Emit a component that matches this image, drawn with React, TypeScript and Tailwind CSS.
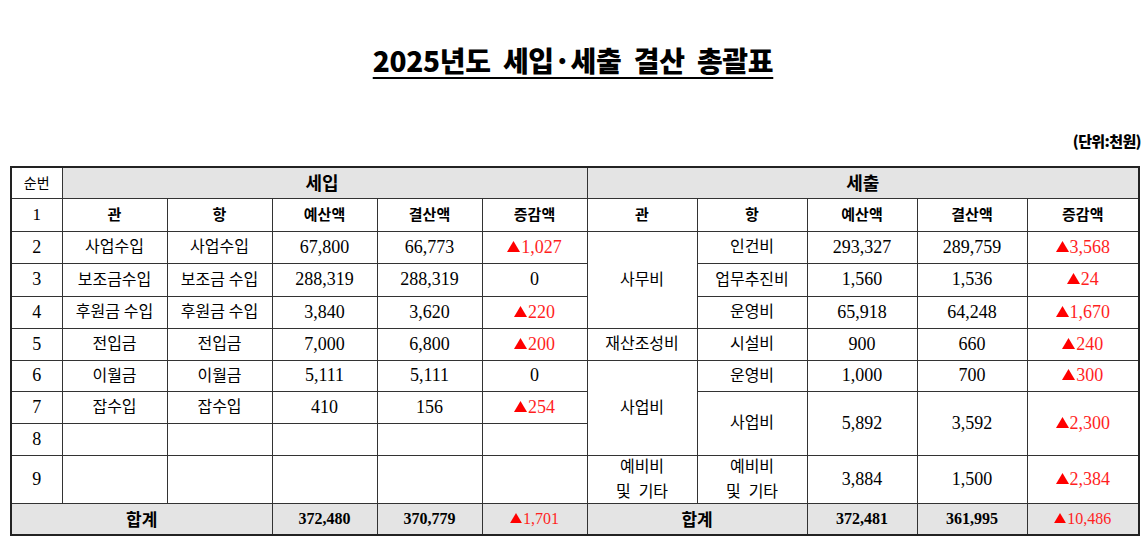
import React from "react";

const serif = { fontFamily: '"Liberation Serif", "Noto Sans CJK KR", serif' };
const sans = { fontFamily: '"Noto Sans CJK KR", sans-serif' };

function Up({ v, small }: { v: string; small?: boolean }) {
  return (
    <span className="text-[#ff1f1f] inline-flex items-baseline">
      <svg
        width={small ? 12 : 13}
        height={small ? 10 : 11}
        viewBox="0 0 13 11"
        className="mr-[1px] self-center relative top-[-1px]"
      >
        <polygon points="6.5,0 13,11 0,11" fill="#ff0000" />
      </svg>
      {v}
    </span>
  );
}

const td = "border border-[#333] text-center align-middle p-0";
const num = `${td} text-[18px]`;
const kr = `${td} text-[16px]`;

export default function App() {
  return (
    <div className="w-[1146px] h-[551px] bg-white overflow-hidden text-black" style={serif}>
      <div className="h-[40px]" />
      <div className="flex justify-center">
        <h1
          className="text-[28px] font-black leading-[40px] underline decoration-2 underline-offset-[5px] tracking-[-0.3px]"
          style={sans}
        >
          2025년도&nbsp; 세입·세출&nbsp; 결산&nbsp; 총괄표
        </h1>
      </div>
      <div className="h-[51px]" />
      <div className="flex justify-end pr-[5px]">
        <span className="text-[15px] font-black leading-[20px] tracking-[-0.6px]" style={sans}>
          (단위:천원)
        </span>
      </div>
      <div className="h-[15px]" />
      <div className="pl-[10px]">
        <table className="table-fixed border-collapse border-2 border-[#222] w-[1128px]">
          <colgroup>
            <col className="w-[51px]" />
            <col className="w-[105px]" />
            <col className="w-[105px]" />
            <col className="w-[105px]" />
            <col className="w-[105px]" />
            <col className="w-[105px]" />
            <col className="w-[110px]" />
            <col className="w-[110px]" />
            <col className="w-[110px]" />
            <col className="w-[110px]" />
            <col className="w-[112px]" />
          </colgroup>
          <tbody>
            <tr className="h-[31px]">
              <td className={`${td} bg-white text-[14px]`} style={sans}>순번</td>
              <td colSpan={5} className={`${td} bg-[#e4e4e4] text-[18px] font-bold text-left pl-[243px]`} style={sans}>세입</td>
              <td colSpan={5} className={`${td} bg-[#e4e4e4] text-[18px] font-bold`} style={sans}>세출</td>
            </tr>
            <tr className="h-[33px] font-bold text-[15px]" style={sans}>
              <td className={`${td} font-normal text-[17px]`} style={serif}>1</td>
              <td className={td}>관</td>
              <td className={td}>항</td>
              <td className={td}>예산액</td>
              <td className={td}>결산액</td>
              <td className={td}>증감액</td>
              <td className={td}>관</td>
              <td className={td}>항</td>
              <td className={td}>예산액</td>
              <td className={td}>결산액</td>
              <td className={td}>증감액</td>
            </tr>
            <tr className="h-[32px]">
              <td className={num}>2</td>
              <td className={kr}>사업수입</td>
              <td className={kr}>사업수입</td>
              <td className={num}>67,800</td>
              <td className={num}>66,773</td>
              <td className={num}><Up v="1,027" /></td>
              <td rowSpan={3} className={kr}>사무비</td>
              <td className={kr}>인건비</td>
              <td className={num}>293,327</td>
              <td className={num}>289,759</td>
              <td className={num}><Up v="3,568" /></td>
            </tr>
            <tr className="h-[33px]">
              <td className={num}>3</td>
              <td className={kr}>보조금수입</td>
              <td className={kr}>보조금 수입</td>
              <td className={num}>288,319</td>
              <td className={num}>288,319</td>
              <td className={num}>0</td>
              <td className={kr}>업무추진비</td>
              <td className={num}>1,560</td>
              <td className={num}>1,536</td>
              <td className={num}><Up v="24" /></td>
            </tr>
            <tr className="h-[32px]">
              <td className={num}>4</td>
              <td className={kr}>후원금 수입</td>
              <td className={kr}>후원금 수입</td>
              <td className={num}>3,840</td>
              <td className={num}>3,620</td>
              <td className={num}><Up v="220" /></td>
              <td className={kr}>운영비</td>
              <td className={num}>65,918</td>
              <td className={num}>64,248</td>
              <td className={num}><Up v="1,670" /></td>
            </tr>
            <tr className="h-[32px]">
              <td className={num}>5</td>
              <td className={kr}>전입금</td>
              <td className={kr}>전입금</td>
              <td className={num}>7,000</td>
              <td className={num}>6,800</td>
              <td className={num}><Up v="200" /></td>
              <td className={kr}>재산조성비</td>
              <td className={kr}>시설비</td>
              <td className={num}>900</td>
              <td className={num}>660</td>
              <td className={num}><Up v="240" /></td>
            </tr>
            <tr className="h-[31px]">
              <td className={num}>6</td>
              <td className={kr}>이월금</td>
              <td className={kr}>이월금</td>
              <td className={num}>5,111</td>
              <td className={num}>5,111</td>
              <td className={num}>0</td>
              <td rowSpan={3} className={kr}>사업비</td>
              <td className={kr}>운영비</td>
              <td className={num}>1,000</td>
              <td className={num}>700</td>
              <td className={num}><Up v="300" /></td>
            </tr>
            <tr className="h-[32px]">
              <td className={num}>7</td>
              <td className={kr}>잡수입</td>
              <td className={kr}>잡수입</td>
              <td className={num}>410</td>
              <td className={num}>156</td>
              <td className={num}><Up v="254" /></td>
              <td rowSpan={2} className={kr}>사업비</td>
              <td rowSpan={2} className={num}>5,892</td>
              <td rowSpan={2} className={num}>3,592</td>
              <td rowSpan={2} className={num}><Up v="2,300" /></td>
            </tr>
            <tr className="h-[32px]">
              <td className={num}>8</td>
              <td className={td}></td>
              <td className={td}></td>
              <td className={td}></td>
              <td className={td}></td>
              <td className={td}></td>
            </tr>
            <tr className="h-[48px]">
              <td className={num}>9</td>
              <td className={td}></td>
              <td className={td}></td>
              <td className={td}></td>
              <td className={td}></td>
              <td className={td}></td>
              <td className={kr}>
                <div className="h-[44px] flex flex-col justify-center items-center leading-[25px]">
                  <span>예비비</span>
                  <span>및&nbsp; 기타</span>
                </div>
              </td>
              <td className={kr}>
                <div className="h-[44px] flex flex-col justify-center items-center leading-[25px]">
                  <span>예비비</span>
                  <span>및&nbsp; 기타</span>
                </div>
              </td>
              <td className={num}>3,884</td>
              <td className={num}>1,500</td>
              <td className={num}><Up v="2,384" /></td>
            </tr>
            <tr className="h-[32px] bg-[#e4e4e4]">
              <td colSpan={3} className={`${td} font-bold text-[17px]`} style={sans}>합계</td>
              <td className={`${td} text-[16px] font-bold`}>372,480</td>
              <td className={`${td} text-[16px] font-bold`}>370,779</td>
              <td className={`${td} text-[16px]`}><Up v="1,701" small /></td>
              <td colSpan={2} className={`${td} font-bold text-[17px]`} style={sans}>합계</td>
              <td className={`${td} text-[16px] font-bold`}>372,481</td>
              <td className={`${td} text-[16px] font-bold`}>361,995</td>
              <td className={`${td} text-[16px]`}><Up v="10,486" small /></td>
            </tr>
          </tbody>
        </table>
      </div>
    </div>
  );
}
